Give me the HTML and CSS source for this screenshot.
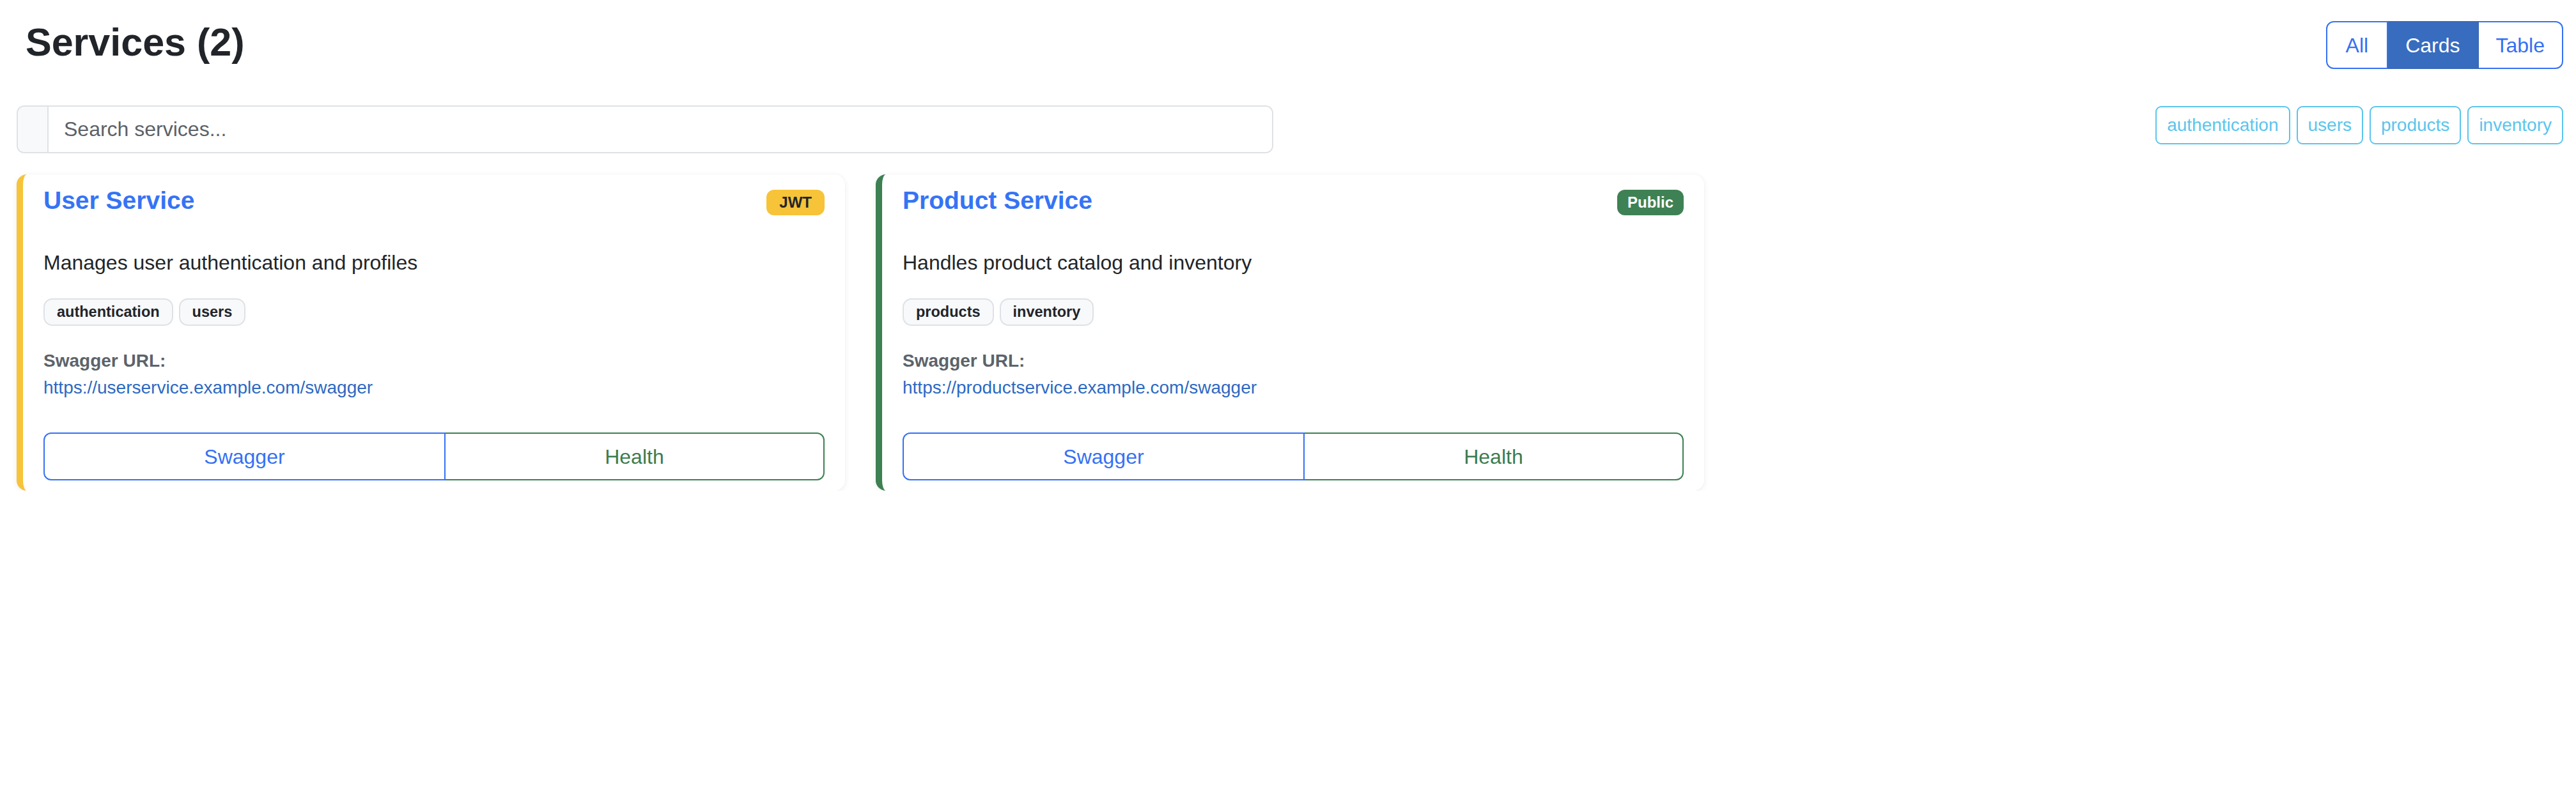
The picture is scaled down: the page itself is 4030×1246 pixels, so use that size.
FILE: index.html
```html
<!DOCTYPE html>
<html lang="en">
<head>
<meta charset="utf-8">
<title>Services</title>
<link rel="stylesheet" href="styles.css">
</head>
<body>
<div class="page">
  <header class="top">
    <h2 class="page-title">Services (2)</h2>
    <div class="view-group">
      <button class="view-btn">All</button>
      <button class="view-btn active">Cards</button>
      <button class="view-btn">Table</button>
    </div>
  </header>

  <div class="toolbar">
    <div class="search">
      <span class="search-addon"></span>
      <input class="search-input" type="text" placeholder="Search services...">
    </div>
    <div class="filters">
      <button class="filter">authentication</button>
      <button class="filter">users</button>
      <button class="filter">products</button>
      <button class="filter">inventory</button>
    </div>
  </div>

  <div class="grid">
    <div class="card card-jwt">
      <div class="card-head">
        <h5 class="card-title">User Service</h5>
        <span class="badge badge-jwt">JWT</span>
      </div>
      <p class="desc">Manages user authentication and profiles</p>
      <div class="tags">
        <span class="tag">authentication</span>
        <span class="tag">users</span>
      </div>
      <div class="label">Swagger URL:</div>
      <a class="url" href="#">https://userservice.example.com/swagger</a>
      <div class="actions">
        <button class="act act-swagger">Swagger</button>
        <button class="act act-health">Health</button>
      </div>
    </div>

    <div class="card card-public">
      <div class="card-head">
        <h5 class="card-title">Product Service</h5>
        <span class="badge badge-public">Public</span>
      </div>
      <p class="desc">Handles product catalog and inventory</p>
      <div class="tags">
        <span class="tag">products</span>
        <span class="tag">inventory</span>
      </div>
      <div class="label">Swagger URL:</div>
      <a class="url" href="#">https://productservice.example.com/swagger</a>
      <div class="actions">
        <button class="act act-swagger">Swagger</button>
        <button class="act act-health">Health</button>
      </div>
    </div>
  </div>
</div>
</body>
</html>
```

FILE: styles.css
```css
* { box-sizing: border-box; }

html, body {
  margin: 0;
  padding: 0;
  background: #ffffff;
}

body {
  font-family: "Liberation Sans", Arial, Helvetica, sans-serif;
  color: #212529;
}

.page {
  padding: 26px 20px 0 26px;
}

/* header */
.top {
  display: flex;
  justify-content: space-between;
  align-items: flex-start;
  margin-bottom: 57px;
}

.page-title {
  margin: 2px 0 0 14px;
  font-size: 61px;
  line-height: 76px;
  font-weight: 700;
  color: #212529;
}

.view-group {
  display: flex;
  margin-top: 7px;
  height: 75px;
}

.view-btn {
  font-family: inherit;
  font-size: 32px;
  line-height: 1;
  padding: 0 27px;
  background: #ffffff;
  color: #3470f3;
  border: 2px solid #3671f3;
  border-left-width: 0;
  cursor: pointer;
}

.view-btn:first-child {
  border-left-width: 2px;
  border-radius: 12px 0 0 12px;
  padding: 0 29px;
}

.view-btn:last-child {
  border-radius: 0 12px 12px 0;
}

.view-btn.active {
  background: #386cbf;
  border-color: #3a68b6;
  color: #ffffff;
}

/* toolbar */
.toolbar {
  display: flex;
  justify-content: space-between;
  align-items: flex-start;
  margin-bottom: 33px;
}

.search {
  display: flex;
  width: 1966px;
  height: 75px;
  border: 2px solid #dee2e6;
  border-radius: 12px;
  overflow: hidden;
}

.search-addon {
  width: 48px;
  background: #f8f9fa;
  border-right: 2px solid #dee2e6;
}

.search-input {
  flex: 1;
  border: 0;
  outline: none;
  padding: 0 24px;
  font-family: inherit;
  font-size: 32px;
  color: #212529;
  background: #ffffff;
}

.search-input::placeholder {
  color: #5c6167;
}

.filters {
  display: flex;
  gap: 10px;
  margin-top: 1px;
}

.filter {
  font-family: inherit;
  font-size: 28px;
  line-height: 1;
  height: 60px;
  padding: 0 16px;
  background: #ffffff;
  color: #5bc5ec;
  border: 2px solid #5bc5ec;
  border-radius: 9px;
  cursor: pointer;
}

/* cards */
.grid {
  display: grid;
  grid-template-columns: repeat(3, 1296px);
  gap: 48px;
}

.card {
  display: flex;
  flex-direction: column;
  background: #ffffff;
  border-radius: 16px;
  border-left: 10px solid #f7c338;
  box-shadow: 0 2px 10px rgba(0, 0, 0, 0.07), 0 0 2px rgba(0, 0, 0, 0.05);
  padding: 21px 32px 16px 32px;
}

.card-public {
  border-left-color: #3d8052;
}

.card-head {
  display: flex;
  justify-content: space-between;
  align-items: flex-start;
  margin-bottom: 50px;
}

.card-title {
  margin: 0;
  font-size: 39px;
  line-height: 40px;
  font-weight: 700;
  color: #3574f5;
}

.badge {
  display: inline-flex;
  align-items: center;
  height: 40px;
  margin-top: 3px;
  padding: 0 20px;
  border-radius: 12px;
  font-size: 24px;
  font-weight: 700;
}

.badge-jwt {
  background: #f7c338;
  color: #212529;
}

.badge-public {
  background: #3e8154;
  color: #ffffff;
  padding: 0 16px;
}

.desc {
  margin: 0 0 32px 0;
  font-size: 32px;
  line-height: 48px;
  color: #212529;
}

.tags {
  display: flex;
  gap: 9px;
  margin-bottom: 34px;
}

.tag {
  display: inline-block;
  padding: 6px 19px;
  font-size: 23.5px;
  line-height: 27px;
  font-weight: 700;
  color: #212529;
  background: #f8f9fa;
  border: 2px solid #dee2e6;
  border-radius: 14px;
}

.label {
  font-size: 28px;
  line-height: 42px;
  font-weight: 700;
  color: #5c636a;
}

.url {
  font-size: 28px;
  line-height: 42px;
  color: #2d69c2;
  text-decoration: none;
  margin-bottom: 49px;
}

.actions {
  display: flex;
  height: 75px;
}

.act {
  flex: 1 1 auto;
  font-family: inherit;
  font-size: 32px;
  line-height: 1;
  background: #ffffff;
  border: 2px solid;
  cursor: pointer;
}

.act-swagger {
  color: #3571f4;
  border-color: #3571f4;
  border-radius: 12px 0 0 12px;
}

.act-health {
  color: #3b7c4e;
  border-color: #3d8052;
  border-left-width: 0;
  border-radius: 0 12px 12px 0;
}
```
